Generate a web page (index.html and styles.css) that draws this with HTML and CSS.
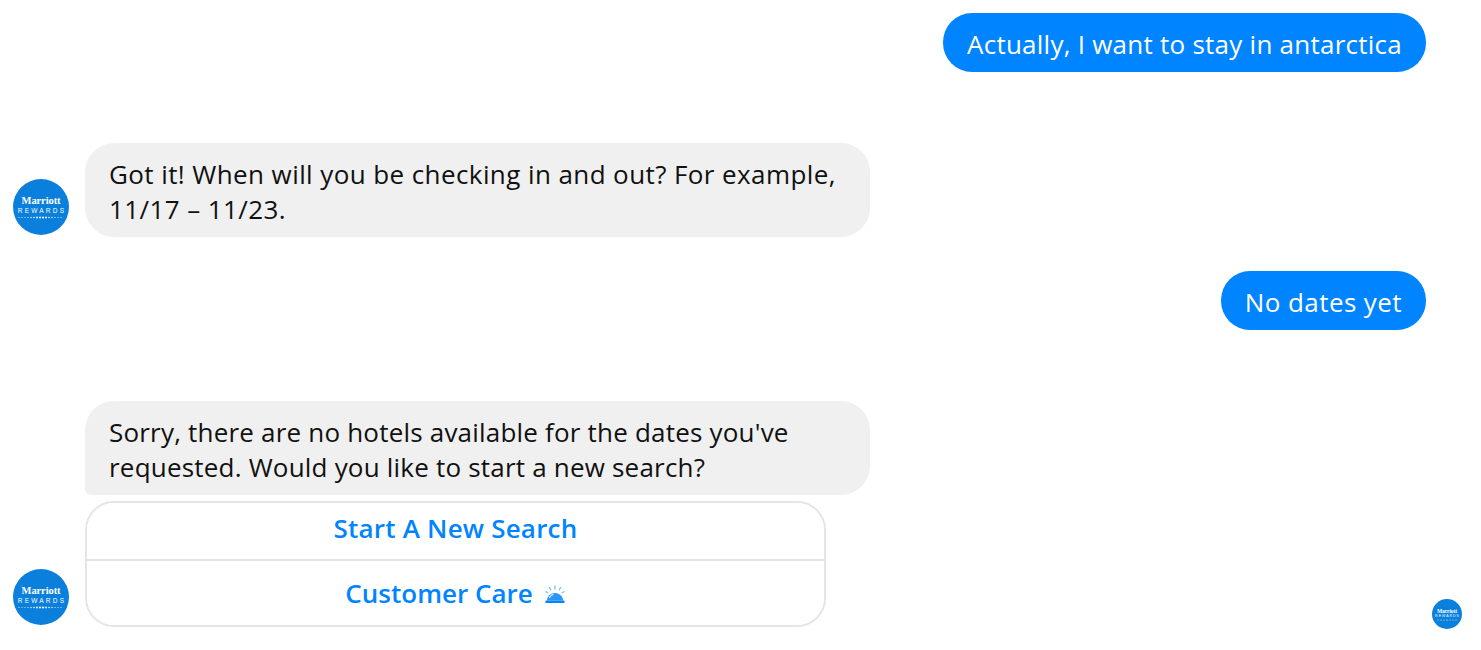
FILE: index.html
```html
<!DOCTYPE html>
<html lang="en">
<head>
<meta charset="utf-8">
<title>Marriott Rewards chat</title>
<link rel="stylesheet" href="styles.css">
</head>
<body>
<main class="chat">
  <div class="row row-out first">
    <div class="bubble out">Actually, I want to stay in antarctica</div>
  </div>
  <div class="row row-in gap-a">
    <div class="avatar">
      <span class="brand">Marriott</span>
      <span class="rewards">REWARDS</span>
      <svg class="dots" viewBox="0 0 48 3" aria-hidden="true"><g fill="#fff"><circle cx="2" cy="1.5" r=".5"/><circle cx="5" cy="1.5" r=".5"/><circle cx="8" cy="1.5" r=".5"/><circle cx="11" cy="1.5" r=".6"/><circle cx="14" cy="1.5" r=".7"/><circle cx="17" cy="1.5" r=".8"/><circle cx="20" cy="1.5" r=".9"/><circle cx="23" cy="1.5" r="1"/><circle cx="26" cy="1.5" r="1.1"/><circle cx="29" cy="1.5" r=".9"/><circle cx="32" cy="1.5" r=".8"/><circle cx="35" cy="1.5" r=".7"/><circle cx="38" cy="1.5" r=".6"/><circle cx="41" cy="1.5" r=".5"/><circle cx="44" cy="1.5" r=".5"/></g></svg>
    </div>
    <div class="bubble in wide-text">Got it! When will you be checking in and out? For example, 11/17 – 11/23.</div>
  </div>
  <div class="row row-out gap-b">
    <div class="bubble out wide-text">No dates yet</div>
  </div>
  <div class="row row-in gap-c">
    <div class="avatar">
      <span class="brand">Marriott</span>
      <span class="rewards">REWARDS</span>
      <svg class="dots" viewBox="0 0 48 3" aria-hidden="true"><g fill="#fff"><circle cx="2" cy="1.5" r=".5"/><circle cx="5" cy="1.5" r=".5"/><circle cx="8" cy="1.5" r=".5"/><circle cx="11" cy="1.5" r=".6"/><circle cx="14" cy="1.5" r=".7"/><circle cx="17" cy="1.5" r=".8"/><circle cx="20" cy="1.5" r=".9"/><circle cx="23" cy="1.5" r="1"/><circle cx="26" cy="1.5" r="1.1"/><circle cx="29" cy="1.5" r=".9"/><circle cx="32" cy="1.5" r=".8"/><circle cx="35" cy="1.5" r=".7"/><circle cx="38" cy="1.5" r=".6"/><circle cx="41" cy="1.5" r=".5"/><circle cx="44" cy="1.5" r=".5"/></g></svg>
    </div>
    <div class="stack">
      <div class="bubble in attached">Sorry, there are no hotels available for the dates you've requested. Would you like to start a new search?</div>
      <div class="actions">
        <button class="action action-first" type="button">Start A New Search</button>
        <button class="action action-last" type="button">Customer Care
          <svg class="bell" viewBox="0 0 22 20" aria-hidden="true">
            <path d="M3 16.5a8 7.5 0 0 1 16 0z" fill="#2a97f5"/>
            <path d="M5.5 14a5.5 5 0 0 1 4-3.6" fill="none" stroke="#cfe8fd" stroke-width="1.2"/>
            <rect x="1.5" y="16.5" width="19" height="2.5" fill="#0084ff"/>
            <path d="M11 1.5v4M5 3l2 3.2M17 3l-2 3.2M1.5 7.5l2.8 1.4M20.5 7.5l-2.8 1.4" fill="none" stroke="#7cc0f7" stroke-width="1.3"/>
          </svg>
        </button>
      </div>
    </div>
    <div class="seen">
      <div class="avatar avatar-small">
        <span class="brand">Marriott</span>
        <span class="rewards">REWARDS</span>
        <svg class="dots" viewBox="0 0 48 3" aria-hidden="true"><g fill="#fff"><circle cx="6" cy="1.5" r="1"/><circle cx="12" cy="1.5" r="1"/><circle cx="18" cy="1.5" r="1"/><circle cx="24" cy="1.5" r="1.2"/><circle cx="30" cy="1.5" r="1"/><circle cx="36" cy="1.5" r="1"/><circle cx="42" cy="1.5" r="1"/></g></svg>
      </div>
    </div>
  </div>
</main>
</body>
</html>
```
FILE: styles.css
```css
* { box-sizing: border-box; }
html, body { margin: 0; padding: 0; background: #fff; }
body { font-family: "Open Sans", "Noto Sans", "Liberation Sans", sans-serif; height: 650px; overflow: hidden; }
.chat { display: flex; flex-direction: column; padding: 13px 19px 0 13px; }
.row { display: flex; }
.row-out { justify-content: flex-end; padding-right: 36px; }
.row-in { align-items: flex-end; gap: 16px; }
.gap-a { margin-top: 71px; }
.gap-b { margin-top: 34px; }
.gap-c { margin-top: 71px; }
.bubble { font-size: 26px; line-height: 35px; letter-spacing: .2px; padding: 14px 24px 10px; border-radius: 29px; }
.wide-text { letter-spacing: .41px; }
.out { background: #0084ff; color: #fff; white-space: nowrap; }
.row-out:first-child .bubble { letter-spacing: .25px; }
.in { background: #f0f0f0; color: #111; width: 785px; }
.avatar {
  width: 56px; height: 56px; flex: none; margin-bottom: 2px; border-radius: 50%;
  background: #0a7fdc; color: #fff; display: flex; flex-direction: column; align-items: center; justify-content: center;
}
.brand { font-family: "Liberation Serif", serif; font-weight: 700; font-size: 10.5px; line-height: 10px; letter-spacing: -.1px; margin-top: 1px; }
.rewards { font-family: "Liberation Sans", sans-serif; font-size: 6.5px; line-height: 9px; letter-spacing: 2.2px; margin-right: -2px; }
.dots { width: 48px; height: 3px; display: block; margin-top: 1px; }
.stack { display: flex; flex-direction: column; gap: 6px; }
.attached { border-bottom-left-radius: 6px; }
.actions { width: 741px; border: 2px solid #e4e5e7; border-radius: 29px; display: flex; flex-direction: column; overflow: hidden; }
.action {
  display: flex; align-items: center; justify-content: center; gap: 11px; width: 100%; background: #fff; border: 0; padding: 0;
  font: 600 26px/35px "Open Sans", "Noto Sans", sans-serif; letter-spacing: .2px; color: #0084ff;
}
.action-first { height: 56px; padding-bottom: 6px; }
.action-last { height: 66px; border-top: 2px solid #e4e5e7; letter-spacing: 0; }
.bell { width: 22px; height: 20px; margin-top: 2px; }
.seen { margin-left: auto; margin-bottom: -2px; }
.avatar-small { width: 30px; height: 30px; margin-bottom: 0; }
.avatar-small .brand { font-size: 5.5px; line-height: 6px; margin-top: 0; }
.avatar-small .rewards { font-size: 3.5px; line-height: 5px; letter-spacing: 1px; margin-right: -1px; }
.avatar-small .dots { width: 24px; height: 2px; margin-top: 0; }
```
